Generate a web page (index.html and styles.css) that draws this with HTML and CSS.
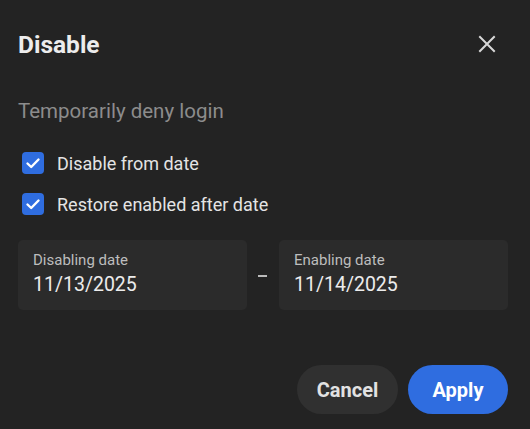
FILE: index.html
```html
<!DOCTYPE html>
<html>
<head>
<meta name="viewport" content="width=device-width, initial-scale=1">
<link rel="stylesheet" href="styles.css">
</head>
<body>

<div class="dialog">
  <div class="header">
    <h2 class="title">Disable</h2>
    <button class="close" aria-label="Close">
      <svg width="18" height="18" viewBox="0 0 18 18"><path d="M2 2L16 16M16 2L2 16" stroke="#d8d8d8" stroke-width="2" stroke-linecap="square"/></svg>
    </button>
  </div>

  <p class="subtitle">Temporarily deny login</p>

  <ul class="checks">
    <li>
      <span class="box"><svg width="22" height="22" viewBox="0 0 22 22"><path d="M5.5 11.5L9.2 15L16.5 7.5" fill="none" stroke="#fff" stroke-width="2.4" stroke-linecap="round" stroke-linejoin="round"/></svg></span>
      Disable from date
    </li>
    <li>
      <span class="box"><svg width="22" height="22" viewBox="0 0 22 22"><path d="M5.5 11.5L9.2 15L16.5 7.5" fill="none" stroke="#fff" stroke-width="2.4" stroke-linecap="round" stroke-linejoin="round"/></svg></span>
      Restore enabled after date
    </li>
  </ul>

  <div class="dates">
    <div class="field">
      <div class="label">Disabling date</div>
      <div class="value">11/13/2025</div>
    </div>
    <div class="dash"></div>
    <div class="field">
      <div class="label">Enabling date</div>
      <div class="value">11/14/2025</div>
    </div>
  </div>

  <div class="actions">
    <button class="btn cancel">Cancel</button>
    <button class="btn apply">Apply</button>
  </div>
</div>

</body>
</html>
```

FILE: styles.css
```css
html, body {
  margin: 0;
  padding: 0;
  background: #232323;
}

body {
  font-family: Roboto, "Liberation Sans", sans-serif;
  color: #e6e6e6;
}

.dialog {
  width: 530px;
  height: 429px;
  box-sizing: border-box;
  padding: 25px 22px 0 18px;
}

.header {
  display: flex;
  align-items: center;
  justify-content: space-between;
  height: 38px;
}

.title {
  margin: 0;
  font-size: 24.5px;
  font-weight: 700;
  color: #ececec;
}

.close {
  background: none;
  border: 0;
  padding: 0;
  margin-right: 12px;
  width: 18px;
  height: 18px;
  display: flex;
}

.subtitle {
  margin: 35px 0 0 0;
  font-size: 20.5px;
  color: #8c8c8c;
  line-height: 26px;
}

.checks {
  list-style-type: none;
  margin: 28px 0 0 0;
  padding: 0;
}

.checks li {
  display: flex;
  align-items: center;
  gap: 13px;
  height: 22px;
  margin-bottom: 19px;
  padding-left: 4px;
  font-size: 18px;
  color: #e4e4e4;
}

.box {
  width: 22px;
  height: 22px;
  border-radius: 4px;
  background: #2f6de0;
  display: flex;
}

.dates {
  display: flex;
  align-items: center;
  margin-top: 25px;
}

.field {
  width: 229px;
  height: 70px;
  box-sizing: border-box;
  padding: 12px 15px 0 15px;
  background: #2b2b2b;
  border-radius: 5px;
}

.label {
  font-size: 15px;
  color: #bdbdbd;
  line-height: 17px;
}

.value {
  margin-top: 3px;
  font-size: 19.5px;
  color: #ececec;
  line-height: 26px;
}

.dash {
  width: 9px;
  height: 1.5px;
  background: #bbbbbb;
  margin: 0 12px 0 11px;
  position: relative;
  top: 1px;
}

.actions {
  display: flex;
  justify-content: flex-end;
  gap: 10px;
  margin-top: 55px;
}

.btn {
  height: 49px;
  border: 0;
  border-radius: 25px;
  font-family: Roboto, "Liberation Sans", sans-serif;
  font-size: 20px;
  font-weight: 700;
  padding: 0;
}

.cancel {
  width: 101px;
  background: #303030;
  color: #e2e2e2;
}

.apply {
  width: 100px;
  background: #2f6de0;
  color: #ffffff;
}
```
